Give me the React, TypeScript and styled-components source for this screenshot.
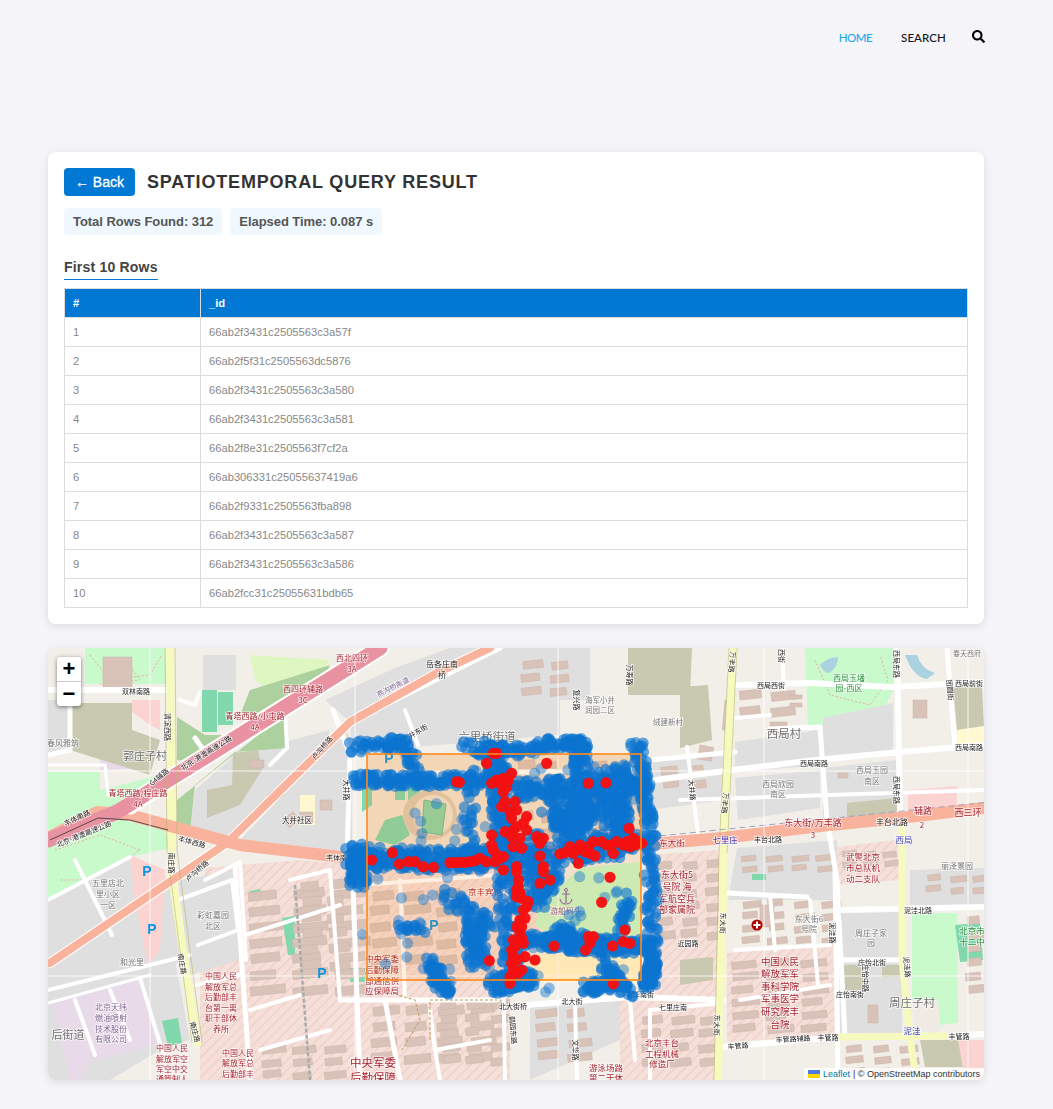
import styled, { createGlobalStyle } from "styled-components";
import { FaSearch } from "react-icons/fa";

const GlobalStyle = createGlobalStyle`
  html, body {
    margin: 0;
    padding: 0;
    background: #f4f4f9;
    font-family: "Liberation Sans", Arial, sans-serif;
  }
`;

const Page = styled.div`
  width: 1053px;
  height: 1109px;
  overflow: hidden;
  box-sizing: border-box;
  padding: 0 69px 29px 48px;
`;

const Nav = styled.nav`
  height: 152px;
  margin-right: -1px;
  box-sizing: border-box;
  padding: 30px 0 0 0;
  display: flex;
  justify-content: flex-end;
  align-items: flex-start;
  gap: 29px;
  font-family: Lato, "Open Sans", sans-serif;
  font-size: 11.5px;
  font-weight: 500;
  line-height: 16px;
`;

const NavLink = styled.a<{ $active?: boolean }>`
  color: ${(p) => (p.$active ? "#1ea7ef" : "#14141e")};
  letter-spacing: ${(p) => (p.$active ? "-0.5px" : "0.1px")};
`;

const SearchIcon = styled.span`
  color: #000;
  font-size: 13px;
  line-height: 13px;
  margin-left: -3px;
`;

const Card = styled.section`
  width: 936px;
  height: 472px;
  box-sizing: border-box;
  padding: 16px;
  background: #fff;
  border-radius: 8px;
  box-shadow: 0 2px 8px rgba(0, 0, 0, 0.1);
`;

const HeaderRow = styled.div`
  display: flex;
  align-items: center;
  gap: 12px;
`;

const BackButton = styled.button`
  width: 71px;
  height: 28px;
  padding: 0;
  border: none;
  border-radius: 4px;
  background: #0078d4;
  color: #fff;
  font-family: inherit;
  font-size: 14px;
  font-weight: 400;
  -webkit-text-stroke: 0.3px #fff;
`;

const Title = styled.h2`
  margin: 0;
  color: #333;
  font-size: 18px;
  font-weight: 700;
  letter-spacing: 0.82px;
`;

const Stats = styled.div`
  display: flex;
  gap: 8px;
  margin-top: 12px;
`;

const StatPill = styled.div`
  height: 27px;
  line-height: 27px;
  padding: 0 9px;
  background: #f0f8ff;
  border-radius: 4px;
  color: #555;
  font-size: 13px;
  font-weight: 700;
  letter-spacing: -0.05px;
`;

const SectionTitle = styled.h3`
  display: inline-block;
  margin: 23px 0 8px;
  padding-bottom: 3px;
  border-bottom: 1px solid #0078d4;
  color: #444;
  font-size: 14px;
  font-weight: 700;
  line-height: 18px;
  letter-spacing: 0.2px;
`;

const Table = styled.table`
  display: table;
  width: 904px;
  border-collapse: collapse;
  table-layout: fixed;
  font-size: 11.2px;
`;

const HeadCell = styled.th`
  height: 29px;
  box-sizing: border-box;
  padding: 0 8px;
  background: #0078d4;
  border: 1px solid #ddd;
  color: #fff;
  font-weight: 700;
  text-align: left;
`;

const Cell = styled.td`
  height: 29px;
  box-sizing: border-box;
  padding: 0 8px;
  border: 1px solid #ddd;
  color: #888;
`;

const MapCard = styled.div`
  position: relative;
  width: 936px;
  height: 432px;
  margin-top: 24px;
  border-radius: 8px;
  overflow: hidden;
  box-shadow: 0 2px 8px rgba(0, 0, 0, 0.1);
`;

const MapSvg = styled.svg`
  display: block;
  width: 936px;
  height: 432px;
  filter: blur(0.35px);
`;

const ZoomBar = styled.div`
  position: absolute;
  top: 9px;
  left: 9px;
  width: 24px;
  border-radius: 3px;
  background: #fff;
  box-shadow: 0 1px 4px rgba(0, 0, 0, 0.5);
`;

const ZoomButton = styled.div<{ $last?: boolean }>`
  height: 24px;
  line-height: 23px;
  text-align: center;
  color: #000;
  font-family: "Liberation Sans", sans-serif;
  font-size: 22px;
  font-weight: 700;
  border-bottom: ${(p) => (p.$last ? "none" : "1px solid #ccc")};
`;

const Attribution = styled.div`
  position: absolute;
  right: 0;
  bottom: 0;
  display: flex;
  align-items: center;
  gap: 3px;
  height: 12px;
  padding: 0 4px;
  background: rgba(255, 255, 255, 0.85);
  color: #333;
  font-size: 9px;
  line-height: 12px;
  white-space: nowrap;
`;

const AttrLink = styled.span`
  color: #0078a8;
`;

const rows = [
  "66ab2f3431c2505563c3a57f",
  "66ab2f5f31c2505563dc5876",
  "66ab2f3431c2505563c3a580",
  "66ab2f3431c2505563c3a581",
  "66ab2f8e31c2505563f7cf2a",
  "66ab306331c25055637419a6",
  "66ab2f9331c2505563fba898",
  "66ab2f3431c2505563c3a587",
  "66ab2f3431c2505563c3a586",
  "66ab2fcc31c25055631bdb65",
];

// seeded so the scatter stays the same on every run
let seed = 7;
function rnd() {
  seed = (seed * 16807) % 2147483647;
  return (seed - 1) / 2147483646;
}

const C = {
  grey: "#e0dfdf",
  park: "#c8facc",
  forest: "#add19e",
  olive: "#c9c8b0",
  lime: "#def6c0",
  pitch: "#80d8ac",
  lilac: "#e8dae8",
  pink: "#fbd3d0",
  hatch: "url(#hatch)",
  camp: "#f2e3d0",
  cream: "#fff8d0",
};

// [colour, points] in page coordinates (the viewBox matches the page)
const areas: [string, string][] = [
  [C.park, "85,648 165,648 168,684 85,684"],
  [C.park, "48,772 100,772 100,790 160,775 165,790 115,810 48,830"],
  [C.lilac, "100,750 145,750 150,768 100,770"],
  [C.grey, "48,700 70,700 70,750 48,755"],
  [C.olive, "70,703 132,703 132,730 160,740 150,775 70,750"],
  [C.pink, "132,700 160,700 160,730 150,725 132,712"],
  [C.park, "48,835 100,815 165,830 170,848 130,857 48,900"],
  [C.grey, "48,900 130,857 172,880 190,960 48,990"],
  [C.grey, "48,990 150,965 175,960 190,1040 160,1050 110,1080 48,1080"],
  [C.lilac, "52,1003 140,978 158,1045 90,1062 80,1080 70,1080"],
  [C.pink, "130,855 165,870 160,950 148,965 135,900"],
  [C.grey, "203,655 236,655 236,690 203,690"],
  [C.lime, "250,655 330,660 305,695 285,702 255,680"],
  [C.forest, "177,717 205,735 233,735 190,762 177,760"],
  [C.forest, "250,690 330,665 320,690 285,712 240,715"],
  [C.grey, "195,790 235,755 330,730 325,745 225,840 190,830"],
  [C.forest, "177,800 287,712 287,748 235,752 195,785 190,832 177,825"],
  [C.olive, "233,753 258,750 262,770 240,805 207,818 207,790 232,785"],
  [C.grey, "395,668 450,648 490,648 440,672 350,722 325,700"],
  [C.grey, "240,840 345,730 352,740 352,852"],
  [C.cream, "300,795 315,795 315,825 300,825"],
  [C.grey, "350,715 440,672 505,648 560,648 560,735 352,752"],
  [C.camp, "367,754 505,754 505,850 367,850"],
  [C.camp, "510,754 640,754 640,850 510,850"],
  [C.hatch, "200,980 205,868 300,860 360,865 367,1080 200,1080"],
  [C.grey, "178,880 236,870 240,960 190,975"],
  [C.hatch, "360,865 510,870 510,1080 360,1080"],
  [C.grey, "530,1003 620,1000 620,1040 530,1080"],
  [C.hatch, "620,1000 720,1000 720,1080 620,1080"],
  [C.hatch, "510,870 540,870 540,945 510,945"],
  [C.park, "540,905 580,868 640,862 640,935 560,940 535,925"],
  [C.cream, "530,955 640,952 640,982 530,982"],
  [C.grey, "520,648 590,648 590,700 520,700"],
  [C.olive, "628,648 692,648 690,695 628,695"],
  [C.grey, "650,760 723,752 723,800 650,810"],
  [C.olive, "680,687 708,685 712,740 680,748"],
  [C.grey, "735,742 818,730 820,765 735,772"],
  [C.grey, "735,778 820,770 820,808 738,820"],
  [C.park, "805,648 893,648 893,690 880,718 808,728"],
  [C.grey, "823,718 893,703 893,752 823,762"],
  [C.grey, "823,768 897,760 897,812 823,820"],
  [C.olive, "847,803 897,798 897,815 847,820"],
  [C.olive, "953,687 982,687 984,728 957,730"],
  [C.cream, "957,730 984,726 984,743 957,746"],
  [C.pink, "908,790 957,786 957,808 908,812"],
  [C.grey, "737,848 837,840 837,900 728,900"],
  [C.hatch, "837,847 897,840 900,880 837,885"],
  [C.hatch, "650,855 720,850 720,1000 650,1000"],
  [C.grey, "910,870 984,868 984,905 910,905"],
  [C.grey, "838,913 902,912 902,957 838,957"],
  [C.hatch, "727,953 833,945 836,1036 727,1042"],
  [C.park, "912,913 957,913 958,1023 940,1025 938,1000 912,1000"],
  ["#f0ebe4", "912,1000 938,1000 940,1034 915,1034"],
  [C.pitch, "955,925 980,923 983,960 960,962"],
  [C.grey, "840,962 902,962 902,1033 840,1033"],
  [C.olive, "840,965 863,965 863,990 840,990"],
  [C.olive, "882,965 902,965 902,977 882,977"],
  [C.olive, "920,1040 963,1040 963,1067 925,1067"],
  [C.olive, "680,960 713,957 713,980 680,985"],
  [C.pink, "958,1040 984,1040 984,1080 965,1080"],
  [C.pitch, "202,690 217,690 217,732 202,732"],
  [C.pitch, "218,692 233,692 233,725 218,725"],
  [C.pitch, "162,1021 178,1018 182,1043 168,1046"],
  [C.pitch, "282,918 295,916 295,955 288,955"],
  [C.pitch, "350,968 367,968 367,982 350,982"],
  [C.pitch, "250,891 260,889 262,896 250,898"],
  [C.pitch, "752,874 766,874 766,880 752,880"],
  [C.pitch, "408,778 420,778 420,800 408,800"],
  [C.pitch, "362,790 372,787 372,805 362,812"],
  [C.pitch, "385,820 402,815 410,835 395,845 375,840"],
  [C.pitch, "395,785 405,785 405,800 395,800"],
];

const roads: [string, number, string][] = [
  ["#ffffff", 6, "48,690 170,690"],
  ["#ffffff", 5, "70,700 70,750 48,755"],
  ["#ffffff", 3, "48,765 105,765 108,795"],
  ["#ffffff", 5, "172,772 205,752 195,738"],
  ["#ffffff", 4, "180,700 195,705 200,692"],
  ["#ffffff", 4, "285,710 287,748 270,765"],
  ["#ffffff", 5, "333,710 350,755 347,860"],
  ["#ffffff", 4, "405,710 418,745"],
  ["#ffffff", 5, "385,705 500,648"],
  ["#ffffff", 5, "352,775 640,770"],
  ["#ffffff", 4, "500,760 505,1080"],
  ["#ffffff", 4, "590,760 585,850"],
  ["#ffffff", 5, "650,760 735,752"],
  ["#ffffff", 6, "640,782 733,770 815,760 900,752 984,745"],
  ["#ffffff", 6, "737,685 810,683 893,687 984,682"],
  ["#ffffff", 5, "820,728 827,820 837,880 845,1037"],
  ["#ffffff", 4, "736,718 770,715"],
  ["#ffffff", 5, "770,729 820,727"],
  ["#ffffff", 6, "897,648 900,810"],
  ["#ffffff", 5, "947,648 955,747"],
  ["#ffffff", 4, "687,747 698,833"],
  ["#ffffff", 4, "782,648 784,688"],
  ["#ffffff", 5, "727,893 807,897"],
  ["#ffffff", 6, "837,910 984,907"],
  ["#ffffff", 5, "838,960 902,960"],
  ["#ffffff", 6, "723,1047 840,1037"],
  ["#ffffff", 6, "947,1036 984,1034"],
  ["#ffffff", 5, "835,870 838,1080"],
  ["#ffffff", 4, "770,895 775,950"],
  ["#ffffff", 4, "735,950 830,945"],
  ["#ffffff", 4, "740,1000 830,985"],
  ["#ffffff", 4, "810,900 818,985"],
  ["#ffffff", 5, "340,1000 497,1000"],
  ["#ffffff", 6, "527,1005 630,997 723,1000"],
  ["#ffffff", 4, "575,1003 577,1080"],
  ["#ffffff", 4, "630,1000 635,1060"],
  ["#ffffff", 4, "650,1010 723,1003"],
  ["#ffffff", 4, "650,1010 650,1080"],
  ["#ffffff", 4, "680,800 984,790"],
  ["#ffffff", 4, "48,900 130,857"],
  ["#ffffff", 4, "48,990 190,955"],
  ["#ffffff", 4, "75,860 112,935"],
  ["#ffffff", 3, "48,1003 150,975"],
  ["#ffffff", 4, "110,990 130,1040"],
  ["#ffffff", 4, "75,1000 95,1055"],
  ["#ffffff", 4, "140,978 165,1060"],
  ["#ffffff", 4, "178,900 232,880 238,930 198,945"],
  ["#ffffff", 4, "195,985 240,975"],
  ["#ffffff", 4, "205,880 240,862 246,960"],
  ["#ffffff", 5, "235,865 250,1080"],
  ["#ffffff", 4, "245,935 340,905"],
  ["#ffffff", 4, "250,1010 300,995"],
  ["#ffffff", 4, "290,880 330,870 340,1000"],
  ["#ffffff", 5, "352,860 360,1080"],
  ["#ffffff", 4, "360,885 500,875"],
  ["#ffffff", 4, "400,880 405,1000"],
  ["#ffffff", 4, "430,1010 435,1050 490,1040"],
  ["#ffffff", 4, "435,1050 440,1080"],
  ["#ffffff", 5, "385,1000 400,1080"],
  ["#ffffff", 4, "260,1050 330,1030"],
  ["#f7fabf", 8, "170,648 172,850 172,877 197,1043"],
  ["#f7fabf", 8, "733,648 723,853 723,900 718,1080"],
  ["#f7fabf", 7, "902,827 902,960 910,1037 916,1080"],
  ["#f7fabf", 7, "840,1037 945,1036"],
  ["#ffffff", 14, "350,858 500,855 640,845"],
  ["#ffffff", 10, "490,648 437,673 350,722 227,843 50,963"],
  ["#f9b29c", 12, "48,838 97,812 130,815 170,826 240,845 350,858 500,855 640,845"],
  ["#f9b29c", 12, "640,845 723,838 820,826 900,818 984,808"],
  ["#f9b29c", 8, "490,648 437,673 350,722 227,843 50,963"],
  ["#ffffff", 19, "380,648 173,777 130,805"],
  ["#e892a2", 15, "380,648 173,777 117,812 48,840"],
];

const hatchBlocks: [number, number, number, number, number, number][] = [
  [248, 890, 3, 7, 38, 16],
  [300, 880, 2, 6, 22, 16],
  [370, 890, 3, 5, 28, 16],
  [370, 1005, 4, 4, 28, 16],
  [440, 1000, 3, 5, 20, 14],
  [535, 1010, 2, 4, 26, 14],
  [640, 1015, 3, 4, 24, 14],
  [730, 960, 3, 6, 30, 13],
  [655, 860, 3, 6, 20, 14],
  [740, 900, 4, 4, 22, 12],
  [840, 850, 3, 2, 16, 10],
  [925, 875, 3, 2, 18, 11],
  [740, 855, 4, 2, 20, 10],
  [845, 1045, 3, 3, 22, 12],
  [260, 1045, 3, 3, 26, 13],
  [965, 915, 1, 6, 18, 14],
  [520, 660, 2, 3, 24, 14],
  [738, 690, 2, 2, 26, 16],
  [516, 760, 4, 5, 20, 17],
  [660, 765, 2, 2, 22, 14],
];

const buildings: [number, number, number, number, number][] = [];
hatchBlocks.forEach(([x, y, cols, rowsN, w, h]) => {
  for (let c = 0; c < cols; c++) {
    for (let r = 0; r < rowsN; r++) {
      buildings.push([
        x + c * (w + 5) + rnd() * 3,
        y + r * h + rnd() * 3,
        w * (0.65 + rnd() * 0.3),
        h * 0.55,
        -6,
      ]);
    }
  }
});
buildings.push(
  [103, 657, 29, 33, 0],
  [268, 795, 13, 10, -40],
  [283, 820, 13, 10, -40],
  [300, 812, 13, 11, 0],
  [320, 800, 12, 10, 0],
  [250, 760, 14, 8, 0],
  [395, 745, 7, 14, -25],
  [770, 722, 17, 11, 0],
  [725, 700, 8, 30, 5],
  [700, 745, 14, 14, 10],
  [790, 695, 12, 4, 0],
  [790, 703, 12, 4, 0],
  [838, 773, 10, 5, 0],
  [913, 700, 14, 18, 0],
  [760, 905, 14, 22, 0],
  [868, 1005, 10, 18, 0],
);

// [dots, spread, route] : the blue markers follow the streets of the query box
const bluePaths: [number, number, number[][]][] = [
  [70, 12, [[353, 748], [385, 743], [405, 745], [418, 775]]],
  [130, 12, [[353, 780], [420, 781], [487, 780]]],
  [120, 12, [[467, 747], [507, 753], [540, 745], [573, 743], [583, 747]]],
  [220, 13, [[637, 743], [650, 830], [652, 963], [648, 985]]],
  [360, 22, [[350, 857], [430, 860], [507, 858], [640, 845]]],
  [270, 20, [[493, 745], [500, 783], [505, 860], [513, 980]]],
  [120, 16, [[580, 750], [590, 840]]],
  [170, 18, [[513, 790], [580, 786], [640, 783]]],
  [100, 16, [[620, 770], [623, 843]]],
  [110, 24, [[553, 803], [573, 837], [560, 820], [570, 805]]],
  [60, 20, [[605, 775], [612, 840]]],
  [70, 20, [[530, 840], [535, 900]]],
  [50, 14, [[540, 897], [555, 875]]],
  [190, 16, [[527, 940], [590, 945], [650, 947]]],
  [90, 20, [[475, 923], [476, 960]]],
  [36, 14, [[433, 963], [440, 985]]],
  [100, 18, [[495, 985], [530, 978]]],
  [60, 14, [[603, 963], [627, 993]]],
  [36, 14, [[585, 987], [610, 985]]],
  [24, 12, [[627, 897], [623, 930]]],
  [14, 8, [[400, 927], [423, 930]]],
  [60, 18, [[360, 850], [358, 887]]],
  [20, 10, [[440, 987], [450, 990]]],
  [30, 14, [[560, 930], [580, 940]]],
  [30, 12, [[470, 860], [470, 770]]],
  [36, 16, [[445, 895], [495, 925]]],
];

const blueDots: [number, number, number][] = [];
bluePaths.forEach(([n, spread, pts]) => {
  for (let i = 0; i < n; i++) {
    const t = (i / n) * (pts.length - 1);
    const k = Math.min(Math.floor(t), pts.length - 2);
    const f = t - k;
    blueDots.push([
      pts[k][0] + (pts[k + 1][0] - pts[k][0]) * f + (rnd() - 0.5) * spread,
      pts[k][1] + (pts[k + 1][1] - pts[k][1]) * f + (rnd() - 0.5) * spread,
      1,
    ]);
  }
});
for (let i = 0; i < 85; i++) {
  blueDots.push([362 + rnd() * 275, 752 + rnd() * 240, 0.7]);
}

// red points read off the reference at 3x, from a crop starting at (340,730)
const redRaw = [
  460,70, 470,70, 440,100, 620,100, 350,155, 358,157, 470,150, 455,160, 490,145, 505,150, 515,130, 490,185, 495,215, 485,230, 525,215, 510,245, 530,240, 515,265, 560,260, 530,290, 550,280, 560,300, 495,305, 455,315, 455,345, 515,320, 540,325, 520,350, 545,355, 595,330, 610,325, 590,320, 600,340, 600,378,
  460,360, 470,375, 490,380, 480,385, 420,385, 405,392, 390,395, 375,397, 360,397, 345,398, 330,398, 280,412, 250,410, 225,395, 205,395, 178,402, 157,368, 95,390, 490,420, 530,410, 530,425, 610,410, 610,425, 630,450, 600,460, 535,470, 540,490, 530,500, 565,515, 550,540, 555,565, 530,590, 545,590, 540,610, 520,630, 545,625, 515,660, 550,640, 555,680, 585,690, 515,700, 545,720, 510,740, 510,760, 520,680, 520,720,
  448,692, 642,648, 737,660, 745,620, 760,620, 750,640, 818,648, 855,600, 870,640, 850,635, 820,762, 785,517, 810,442, 867,295, 745,160, 798,158,
  660,372, 690,350, 700,370, 720,345, 735,365, 760,335, 765,378, 785,335, 815,345, 830,335, 850,345, 880,325, 885,345, 905,340, 820,370, 715,400, 750,370, 870,350,
  710,360, 745,350, 675,368, 895,335, 860,335, 800,345, 535,450, 530,480, 545,505, 560,530, 540,570, 525,650, 530,690, 535,730, 480,160, 500,170, 520,300, 440,395, 465,395,
];
const redDots: [number, number][] = [];
for (let i = 0; i < redRaw.length; i += 2) {
  redDots.push([340 + redRaw[i] / 3, 730 + redRaw[i + 1] / 3]);
}

type Kind = "road" | "place" | "big" | "red" | "blue" | "green" | "purple";
const labelColour: Record<Kind, string> = {
  road: "#222",
  place: "#777",
  big: "#6f6f6f",
  red: "#a8232f",
  blue: "#3a3ab8",
  green: "#2a8f3a",
  purple: "#7d5f8f",
};

// [text, x, y, size, kind, rotation]
const labels: [string, number, number, number, Kind, number?][] = [
  ["郭庄子村", 145, 756, 11, "big"],
  ["六里桥街道", 487, 737, 11.5, "big"],
  ["西局村", 784, 734, 11.5, "big"],
  ["周庄子村", 912, 1003, 11.5, "big"],
  ["春风雅筑", 63, 743, 8, "place"],
  ["双林南路", 136, 691, 7, "road"],
  ["西北四环", 352, 658, 8, "red"],
  ["3A", 352, 669, 8, "red"],
  ["西四环辅路", 303, 689, 8, "red"],
  ["3C", 303, 700, 8, "red"],
  ["青塔西路/小屯路", 255, 716, 8, "red"],
  ["4A", 255, 727, 8, "red"],
  ["青塔西路/程庄路", 138, 793, 8, "red"],
  ["4A", 138, 804, 8, "red"],
  ["北京-港澳高速公路", 206, 753, 7, "road", -32],
  ["北京-港澳高速公路", 84, 834, 7, "road", -22],
  ["丰体南路", 77, 818, 7, "road", -25],
  ["丰体西路", 192, 842, 7, "road", 15],
  ["丰体南路", 340, 858, 7, "road", 3],
  ["卢沟桥路", 322, 748, 7, "road", -50],
  ["卢沟桥路", 197, 871, 7, "road", -42],
  ["燕沟桥南道", 393, 687, 7, "purple", -27],
  ["G4辅路", 159, 777, 7, "road", -40],
  ["清滨西路", 168, 727, 7, "road", 90],
  ["大井社区", 297, 820, 7.5, "road"],
  ["大井路", 347, 790, 7, "road", 90],
  ["大井东街", 415, 733, 7, "road", -30],
  ["岳各庄南", 442, 664, 8, "road"],
  ["桥", 442, 675, 8, "road"],
  ["海军小井", 600, 700, 7.5, "place"],
  ["润园二区", 600, 710, 7.5, "place"],
  ["绒建新村", 668, 722, 7.5, "place"],
  ["万寿路", 630, 675, 7, "road", 90],
  ["复兴路", 577, 700, 7, "road", 90],
  ["万丰路", 732, 662, 7, "road", 95],
  ["万丰路", 725, 803, 7, "road", 95],
  ["西局西街", 771, 685, 7, "road"],
  ["西局南路", 814, 763, 7, "road"],
  ["西局南路", 969, 747, 7, "road"],
  ["西局前街", 969, 683, 7, "road"],
  ["春天西府", 967, 653, 7, "place"],
  ["西街", 782, 656, 7, "road", 90],
  ["西局东路", 897, 664, 7, "road", 90],
  ["西局东路", 897, 790, 7, "road", 90],
  ["团圆街", 950, 690, 7, "road", 85],
  ["大井路", 692, 790, 7, "road", 85],
  ["西局欣园", 778, 784, 8, "place"],
  ["南区", 778, 794, 8, "place"],
  ["西局玉园", 872, 770, 8, "place"],
  ["南区", 872, 781, 8, "place"],
  ["西局玉墦", 849, 678, 8, "green"],
  ["园-西区", 849, 688, 8, "green"],
  ["丽泽景园", 957, 866, 8, "place"],
  ["东大街/万丰路", 813, 823, 9, "red"],
  ["3", 813, 835, 8, "red"],
  ["辅路", 923, 811, 9, "red"],
  ["2", 922, 825, 8, "red"],
  ["西三环", 968, 813, 9, "red"],
  ["丰台北路", 892, 822, 8, "road"],
  ["丰台北路", 768, 839, 7, "road"],
  ["七里庄", 725, 840, 8.5, "blue"],
  ["西局", 904, 840, 8.5, "blue"],
  ["泥洼", 912, 1031, 8.5, "blue"],
  ["东大街", 672, 843, 8.5, "red"],
  ["东大街5", 677, 875, 9, "red"],
  ["号院 海", 677, 887, 9, "red"],
  ["军航空兵", 677, 899, 9, "red"],
  ["部家属院", 677, 910, 9, "red"],
  ["武警北京", 863, 857, 8.5, "red"],
  ["市总队机", 863, 868, 8.5, "red"],
  ["动二支队", 863, 879, 8.5, "red"],
  ["东大街6", 809, 919, 8, "place"],
  ["号院", 809, 929, 8, "place"],
  ["周庄子家", 871, 933, 8, "place"],
  ["园", 871, 943, 8, "place"],
  ["北京市", 972, 931, 8.5, "green"],
  ["十二中", 972, 942, 8.5, "green"],
  ["中国人民", 780, 962, 9.5, "red"],
  ["解放军军", 780, 974, 9.5, "red"],
  ["事科学院", 780, 987, 9.5, "red"],
  ["军事医学", 780, 999, 9.5, "red"],
  ["研究院丰", 780, 1012, 9.5, "red"],
  ["台院", 780, 1025, 9.5, "red"],
  ["泥洼北路", 918, 910, 7, "road"],
  ["庄怡北街", 872, 962, 7, "road"],
  ["庄怡南街", 850, 994, 7, "road"],
  ["庄怡中路", 866, 978, 7, "road", 90],
  ["泥洼路", 833, 933, 7, "road", 90],
  ["泥洼路", 907, 967, 7, "road", 85],
  ["东大街", 723, 923, 7, "road", 92],
  ["东大街", 717, 1025, 7, "road", 92],
  ["近园路", 688, 943, 7, "road"],
  ["丰管路", 738, 1046, 7, "road", -5],
  ["丰管路辅路", 793, 1039, 7, "road", -3],
  ["丰管路", 828, 1037, 7, "road"],
  ["丰管路", 959, 1036, 7, "road"],
  ["五里店北", 108, 883, 8, "place"],
  ["里小区", 108, 894, 8, "place"],
  ["一区", 108, 905, 8, "place"],
  ["彩虹嘉园", 213, 915, 8, "place"],
  ["北区", 213, 926, 8, "place"],
  ["和光里", 132, 962, 8, "place"],
  ["北京天纬", 111, 1007, 8, "purple"],
  ["燃油喷射", 111, 1018, 8, "purple"],
  ["技术股份", 111, 1029, 8, "purple"],
  ["有限公司", 111, 1039, 8, "purple"],
  ["后街道", 68, 1035, 11, "big"],
  ["中国人民", 221, 976, 8, "red"],
  ["解放军总", 221, 987, 8, "red"],
  ["后勤部丰", 221, 997, 8, "red"],
  ["台第一离", 221, 1008, 8, "red"],
  ["职干部休", 221, 1018, 8, "red"],
  ["养所", 221, 1029, 8, "red"],
  ["中国人民", 172, 1048, 8, "red"],
  ["解放军空", 172, 1059, 8, "red"],
  ["军空中交", 172, 1069, 8, "red"],
  ["通管制人", 172, 1079, 8, "red"],
  ["中国人民", 238, 1053, 8, "red"],
  ["解放军总", 238, 1063, 8, "red"],
  ["后勤部丰", 238, 1074, 8, "red"],
  ["南庄路", 172, 863, 7, "road", 90],
  ["南庄路", 182, 964, 7, "road", 80],
  ["南庄路", 195, 1032, 7, "road", 75],
  ["中央军委", 382, 959, 8.5, "red"],
  ["后勤保障", 382, 970, 8.5, "red"],
  ["部通信供", 382, 981, 8.5, "red"],
  ["应保障局", 382, 991, 8.5, "red"],
  ["京丰宾馆", 485, 892, 8.5, "red"],
  ["游船码头", 566, 911, 8, "purple"],
  ["中央军委", 373, 1063, 11.5, "red"],
  ["后勤保障", 373, 1078, 11.5, "red"],
  ["北大街桥", 513, 1006, 7, "road"],
  ["北大街", 572, 1001, 7, "road"],
  ["丰华南街", 640, 994, 7, "road"],
  ["七里庄南", 673, 1007, 7, "road"],
  ["鹊园东路", 513, 1030, 7, "road", 85],
  ["文华路", 576, 1050, 7, "road", 90],
  ["北京丰台", 662, 1043, 8.5, "red"],
  ["工程机械", 662, 1054, 8.5, "red"],
  ["修造厂", 662, 1064, 8.5, "red"],
  ["游泳场路", 606, 1068, 8.5, "red"],
  ["第二干休", 606, 1078, 8.5, "red"],
];

const parks: [number, number][] = [
  [147, 871],
  [152, 929],
  [322, 973],
  [389, 758],
  [434, 925],
];

const seams = [
  "150,648 150,1080",
  "355,648 355,1080",
  "558,648 558,1080",
  "764,648 764,1080",
  "968,648 968,1080",
  "48,771 984,771",
  "48,976 984,976",
];

const dottedPaths = [
  "90,655 110,680 150,675 162,655",
  "815,660 830,695 870,705 888,680 880,655",
  "55,850 100,835 140,850 90,880 60,880",
  "125,660 140,680 100,684",
];

function MapDrawing() {
  return (
    <MapSvg viewBox="48 648 936 432">
      <defs>
        <pattern
          id="hatch"
          width="7"
          height="7"
          patternUnits="userSpaceOnUse"
          patternTransform="rotate(-45)"
        >
          <rect width="7" height="7" fill="#f5dfd8" />
          <rect width="7" height="1.2" fill="#eccfc8" />
        </pattern>
      </defs>
      <rect x="48" y="648" width="936" height="432" fill="#f2efe9" />
      {areas.map(([fill, points], i) => (
        <polygon key={i} points={points} fill={fill} />
      ))}
      {dottedPaths.map((d, i) => (
        <polyline
          key={i}
          points={d}
          fill="none"
          stroke="#f4a8a0"
          strokeWidth="1"
          strokeDasharray="2 2"
        />
      ))}
      <path d="M820 665q6 12 12 6t6-14q-10 0-18 8z" fill="#aad3df" />
      <path d="M905 655q8 22 22 24l8-6q-14-4-18-18z" fill="#aad3df" />
      {buildings.map(([x, y, w, h, r], i) => (
        <rect
          key={i}
          x={x}
          y={y}
          width={w}
          height={h}
          fill="#d9c3b8"
          stroke="#c9b3a8"
          strokeWidth="0.5"
          transform={r ? `rotate(${r} ${x} ${y})` : undefined}
        />
      ))}
      <ellipse cx="430" cy="815" rx="27" ry="25" fill="#dccbb2" />
      <ellipse cx="433" cy="815" rx="20" ry="20" fill="#f0e3d0" />
      <polygon points="424,800 446,804 442,835 422,832" fill="#89d6a8" stroke="#72bd92" />
      {roads.map(([colour, w, points], i) => (
        <polyline
          key={i}
          points={points}
          fill="none"
          stroke={colour}
          strokeWidth={w}
          strokeLinejoin="round"
          strokeLinecap="round"
        />
      ))}
      <polyline points="165,648 167,850 192,1043" fill="none" stroke="#b8b86a" strokeWidth="0.6" />
      <polyline points="175,648 177,850 202,1043" fill="none" stroke="#b8b86a" strokeWidth="0.6" />
      <polyline points="727,853 737,648" fill="none" stroke="#b8b86a" strokeWidth="0.6" />
      <polyline points="729,648 719,853 714,1080" fill="none" stroke="#b8b86a" strokeWidth="0.6" />
      <polyline points="50,840 98,818 130,820 168,830" fill="none" stroke="#333" strokeWidth="0.8" />
      <polyline points="295,885 300,950 310,1080" fill="none" stroke="#aaa" strokeWidth="2.5" strokeDasharray="4 2" />
      <polyline points="640,838 990,802" fill="none" stroke="#a7a0c0" strokeWidth="1" strokeDasharray="6 4" />
      <polyline points="380,990 415,1000 420,1020 402,1050" fill="none" stroke="#c09a50" strokeWidth="1" strokeDasharray="3 2" />
      <polyline points="430,1040 430,1000 497,1000" fill="none" stroke="#c09a50" strokeWidth="1" strokeDasharray="3 2" />
      {seams.map((p, i) => (
        <polyline key={i} points={p} stroke="#ffffff" strokeWidth="1" opacity="0.85" fill="none" />
      ))}
      <g fontFamily="'Noto Sans CJK SC', 'Liberation Sans', sans-serif" textAnchor="middle">
        {labels.map(([text, x, y, size, kind, rot], i) => (
          <text
            key={i}
            x={x}
            y={y + size * 0.36}
            fontSize={size}
            fill={labelColour[kind]}
            stroke="#fff"
            strokeOpacity="0.75"
            strokeWidth="1.6"
            paintOrder="stroke"
            transform={rot ? `rotate(${rot} ${x} ${y})` : undefined}
          >
            {text}
          </text>
        ))}
        {parks.map(([x, y], i) => (
          <text key={i} x={x} y={y + 5} fontSize="14" fontWeight="700" fill="#0f95de" fontFamily="'Liberation Sans', sans-serif">
            P
          </text>
        ))}
      </g>
      <path
        d="M566 891v12m-4-9h8m-10 5q1 5 6 5t6-5"
        fill="none"
        stroke="#8a5fae"
        strokeWidth="1.2"
      />
      <circle cx="566" cy="890" r="1.5" fill="none" stroke="#8a5fae" />
      <circle cx="757" cy="925" r="5.5" fill="#ad0000" />
      <path d="M757 921.5v7M753.5 925h7" stroke="#fff" strokeWidth="2" />
      <rect x="367" y="754" width="274" height="226" fill="#ff7800" fillOpacity="0.12" />
      {blueDots.map(([x, y, o], i) => (
        <circle key={i} cx={x} cy={y} r="5.6" fill="#0b74d1" fillOpacity={o * 0.62} />
      ))}
      {redDots.map(([x, y], i) => (
        <circle key={i} cx={x} cy={y} r="5.6" fill="#f50f0f" fillOpacity="0.97" />
      ))}
      <rect x="367" y="754" width="274" height="226" fill="none" stroke="#ff8a1c" strokeWidth="1.6" />
    </MapSvg>
  );
}

export default function App() {
  return (
    <Page>
      <GlobalStyle />
      <Nav>
        <NavLink $active>HOME</NavLink>
        <NavLink>SEARCH</NavLink>
        <SearchIcon>
          <FaSearch />
        </SearchIcon>
      </Nav>
      <Card>
        <HeaderRow>
          <BackButton>← Back</BackButton>
          <Title>SPATIOTEMPORAL QUERY RESULT</Title>
        </HeaderRow>
        <Stats>
          <StatPill>Total Rows Found: 312</StatPill>
          <StatPill>Elapsed Time: 0.087 s</StatPill>
        </Stats>
        <SectionTitle>First 10 Rows</SectionTitle>
        <Table>
          <colgroup>
            <col style={{ width: 136 }} />
            <col />
          </colgroup>
          <thead>
            <tr>
              <HeadCell>#</HeadCell>
              <HeadCell>_id</HeadCell>
            </tr>
          </thead>
          <tbody>
            {rows.map((id, i) => (
              <tr key={id + i}>
                <Cell>{i + 1}</Cell>
                <Cell>{id}</Cell>
              </tr>
            ))}
          </tbody>
        </Table>
      </Card>
      <MapCard>
        <MapDrawing />
        <ZoomBar>
          <ZoomButton>+</ZoomButton>
          <ZoomButton $last>−</ZoomButton>
        </ZoomBar>
        <Attribution>
          <svg width="12" height="8" viewBox="0 0 12 8">
            <rect width="12" height="4" fill="#4c7be1" />
            <rect y="4" width="12" height="4" fill="#ffd500" />
          </svg>
          <AttrLink>Leaflet</AttrLink>
          <span>| © OpenStreetMap contributors</span>
        </Attribution>
      </MapCard>
    </Page>
  );
}
